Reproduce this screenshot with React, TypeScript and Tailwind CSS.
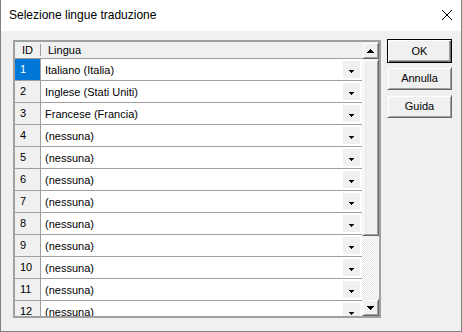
import React from "react";

const rows = [
  { id: 1, lang: "Italiano (Italia)" },
  { id: 2, lang: "Inglese (Stati Uniti)" },
  { id: 3, lang: "Francese (Francia)" },
  { id: 4, lang: "(nessuna)" },
  { id: 5, lang: "(nessuna)" },
  { id: 6, lang: "(nessuna)" },
  { id: 7, lang: "(nessuna)" },
  { id: 8, lang: "(nessuna)" },
  { id: 9, lang: "(nessuna)" },
  { id: 10, lang: "(nessuna)" },
  { id: 11, lang: "(nessuna)" },
  { id: 12, lang: "(nessuna)" },
];

function SmallDown() {
  return (
    <svg width="5" height="3" viewBox="0 0 5 3" shapeRendering="crispEdges">
      <rect x="0" y="0" width="5" height="1" fill="#000" />
      <rect x="1" y="1" width="3" height="1" fill="#000" />
      <rect x="2" y="2" width="1" height="1" fill="#000" />
    </svg>
  );
}

function ScrollArrow({ up }: { up?: boolean }) {
  return (
    <svg
      width="7"
      height="4"
      viewBox="0 0 7 4"
      shapeRendering="crispEdges"
      className={up ? "rotate-180" : ""}
    >
      <rect x="0" y="0" width="7" height="1" fill="#000" />
      <rect x="1" y="1" width="5" height="1" fill="#000" />
      <rect x="2" y="2" width="3" height="1" fill="#000" />
      <rect x="3" y="3" width="1" height="1" fill="#000" />
    </svg>
  );
}

const raised =
  "border border-t-[#f0f0f0] border-l-[#f0f0f0] border-r-[#696969] border-b-[#696969] shadow-[inset_1px_1px_#ffffff,inset_-1px_-1px_#a0a0a0] bg-[#f0f0f0]";

function GridRow({ id, lang }: { id: number; lang: string }) {
  const selected = id === 1;
  return (
    <div className="flex h-[22px] shrink-0 border-b border-[#a0a0a0]">
      <div
        className={
          "w-[26px] border-r border-[#a0a0a0] flex items-center pl-[5px] " +
          (selected ? "bg-[#0078d7] text-white" : "bg-[#f0f0f0] text-black")
        }
      >
        {id}
      </div>
      <div className="flex-1 bg-white flex justify-between pl-[4px] pr-[2px]">
        <span className="self-center pt-[1px]">{lang}</span>
        <div className="w-[17px] h-[17px] mt-[2px] bg-[#f0f0f0] flex justify-center pt-[9px]">
          <SmallDown />
        </div>
      </div>
    </div>
  );
}

export default function App() {
  return (
    <div
      className="w-[462px] h-[332px] flex flex-col bg-[#f0f0f0] border-x border-b border-[#808080] overflow-hidden text-[11px] text-black"
      style={{ fontFamily: '"Liberation Sans", Arial, sans-serif' }}
    >
      {/* title bar */}
      <div className="h-[31px] shrink-0 bg-white flex items-center justify-between pl-[8px] pr-[8px]">
        <span className="text-[12px] pb-[1px]">Selezione lingue traduzione</span>
        <svg width="12" height="12" viewBox="0 0 12 12" className="mb-[1px]">
          <path d="M1 1L11 11M11 1L1 11" stroke="#000" strokeWidth="1" />
        </svg>
      </div>

      {/* body */}
      <div className="flex pt-[9px] pl-[12px]">
        <div className="w-[368px] h-[278px] border-2 border-[#a0a0a0] flex">
          <div className="flex-1 flex flex-col overflow-hidden">
            <div className="flex h-[17px] shrink-0 border-b border-[#a0a0a0] bg-[#f0f0f0]">
              <div className="w-[25px] flex items-center justify-center">ID</div>
              <div className="w-[1px] h-[12px] self-center bg-[#a0a0a0]" />
              <div className="flex items-center pl-[7px]">Lingua</div>
            </div>
            {rows.map((r) => (
              <GridRow key={r.id} id={r.id} lang={r.lang} />
            ))}
          </div>

          {/* scrollbar */}
          <div className="w-[17px] flex flex-col bg-[#f0f0f0]">
            <div className={"h-[17px] shrink-0 flex items-center justify-center " + raised}>
              <ScrollArrow up />
            </div>
            <div className={"h-[177px] shrink-0 " + raised} />
            <div className="flex-1 bg-[repeating-conic-gradient(#ffffff_0%_25%,#e6e6e6_0%_50%)] bg-[length:2px_2px]" />
            <div className={"h-[17px] shrink-0 flex items-center justify-center " + raised}>
              <ScrollArrow />
            </div>
          </div>
        </div>

        {/* buttons */}
        <div className="ml-[6px] flex flex-col">
          <button className="w-[65px] h-[24px] -mt-[1px] border border-black bg-[#f0f0f0] shadow-[inset_1px_1px_#ffffff,inset_-1px_-1px_#696969,inset_-2px_-2px_#a0a0a0]">
            OK
          </button>
          <button className={"w-[65px] h-[23px] mt-[4px] " + raised}>Annulla</button>
          <button className={"w-[65px] h-[23px] mt-[5px] " + raised}>Guida</button>
        </div>
      </div>
    </div>
  );
}
